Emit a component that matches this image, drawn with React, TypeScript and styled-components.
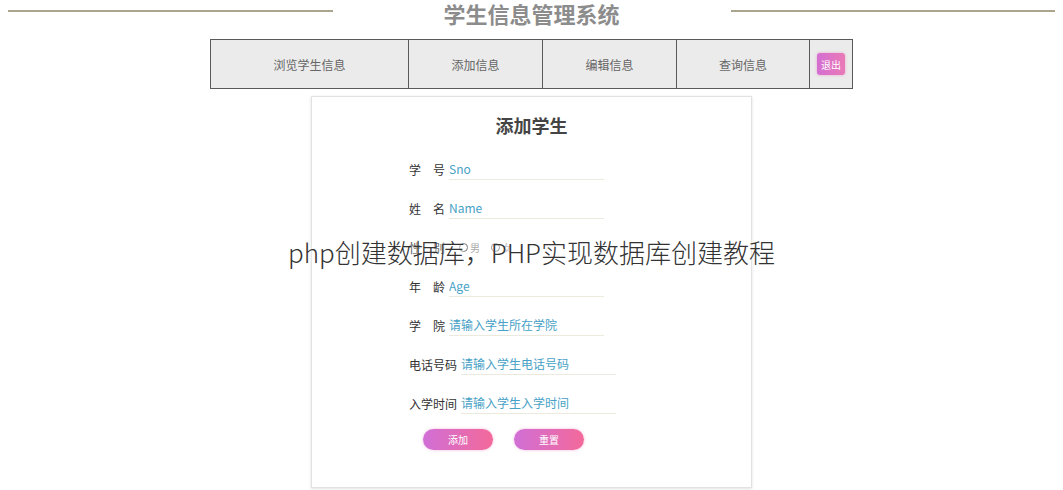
import React from "react";
import styled, { createGlobalStyle } from "styled-components";

const GlobalStyle = createGlobalStyle`
  html, body {
    margin: 0;
    padding: 0;
    background: #ffffff;
  }
  body {
    font-family: "Noto Sans CJK SC", "Noto Sans", sans-serif;
  }
`;

const Page = styled.div`
  position: relative;
  width: 1063px;
  height: 490px;
  overflow: hidden;
  display: flex;
  flex-direction: column;
  align-items: center;
`;

const Header = styled.div`
  width: 100%;
  box-sizing: border-box;
  height: 26px;
  padding: 0 8px;
  display: flex;
  align-items: center;
  gap: 111px;
  margin-bottom: 13px;
`;

const HeaderLine = styled.div`
  flex: 1;
  height: 2px;
  margin-top: -5px;
  background: #aaa58c;
`;

const Title = styled.h1`
  margin: 0;
  font-size: 22px;
  line-height: 26px;
  font-weight: 700;
  color: #8c8c8c;
  white-space: nowrap;
`;

const Nav = styled.div`
  width: 643px;
  height: 50px;
  box-sizing: border-box;
  border: 1px solid #5a5a5a;
  background: #ebebeb;
  display: grid;
  grid-template-columns: 197px 134px 134px 133px 1fr;
`;

const NavItem = styled.div<{ $first?: boolean }>`
  display: flex;
  align-items: center;
  justify-content: center;
  border-left: ${(p) => (p.$first ? "none" : "1px solid #5a5a5a")};
  font-size: 12px;
  color: #666;
`;

const LogoutButton = styled.button`
  width: 28px;
  height: 22px;
  padding: 0;
  border: none;
  border-radius: 3px;
  background: linear-gradient(90deg, #d36fd2, #ea79b6);
  box-shadow: 0 0 3px rgba(230, 120, 190, 0.6);
  color: #fff;
  font-family: inherit;
  font-size: 10px;
`;

const Card = styled.div`
  margin-top: 7px;
  width: 441px;
  height: 392px;
  box-sizing: border-box;
  background: #fff;
  border: 1px solid #e2e2e2;
  box-shadow: 0 1px 3px rgba(0, 0, 0, 0.12);
  padding: 15px 0 0 97px;
`;

const CardTitle = styled.h2`
  margin: 0 0 19px -97px;
  text-align: center;
  font-size: 18px;
  line-height: 26px;
  font-weight: 700;
  color: #444;
`;

const Form = styled.div`
  display: flex;
  flex-direction: column;
  gap: 15px;
`;

const Row = styled.div`
  height: 24px;
  display: flex;
  align-items: center;
  gap: 1px;
`;

const Label = styled.span`
  font-size: 12px;
  color: #333;
  white-space: pre;
  margin-right: 3px;
`;

const Field = styled.input`
  width: 155px;
  height: 22px;
  box-sizing: border-box;
  border: none;
  border-bottom: 1px solid #ece9de;
  padding: 0;
  outline: none;
  font-family: inherit;
  font-size: 12px;
  background: transparent;
  &::placeholder {
    color: #47a1c6;
  }
`;

const RadioGroup = styled.label`
  display: flex;
  align-items: center;
  gap: 2px;
  margin-left: 10px;
  font-size: 10px;
  color: #aaa;
`;

const Radio = styled.input`
  width: 9px;
  height: 9px;
  margin: 0;
`;

const Buttons = styled.div`
  display: flex;
  gap: 21px;
  margin: 14px 0 0 14px;
`;

const PillButton = styled.button`
  width: 70px;
  height: 21px;
  border: none;
  border-radius: 11px;
  background: linear-gradient(90deg, #d06fd6, #f3699a);
  box-shadow: 0 0 3px rgba(230, 110, 180, 0.5);
  color: #fff;
  font-family: inherit;
  font-size: 10px;
  padding: 0;
`;

const Overlay = styled.div`
  position: absolute;
  left: 0;
  right: 0;
  top: 234px;
  text-align: center;
  font-size: 26px;
  line-height: 36px;
  font-weight: 300;
  color: #333;
  text-shadow: 0 0 3px #fff, 0 0 6px #fff;
`;

const navItems = ["浏览学生信息", "添加信息", "编辑信息", "查询信息"];

const fields = [
  { label: "学　号", placeholder: "Sno" },
  { label: "姓　名", placeholder: "Name" },
];

const fieldsAfter = [
  { label: "年　龄", placeholder: "Age" },
  { label: "学　院", placeholder: "请输入学生所在学院" },
  { label: "电话号码", placeholder: "请输入学生电话号码" },
  { label: "入学时间", placeholder: "请输入学生入学时间" },
];

const App: React.FC = () => {
  return (
    <Page>
      <GlobalStyle />
      <Header>
        <HeaderLine />
        <Title>学生信息管理系统</Title>
        <HeaderLine />
      </Header>
      <Nav>
        {navItems.map((item, i) => (
          <NavItem key={item} $first={i === 0}>
            {item}
          </NavItem>
        ))}
        <NavItem>
          <LogoutButton>退出</LogoutButton>
        </NavItem>
      </Nav>
      <Card>
        <CardTitle>添加学生</CardTitle>
        <Form>
          {fields.map((f) => (
            <Row key={f.label}>
              <Label>{f.label}</Label>
              <Field placeholder={f.placeholder} />
            </Row>
          ))}
          <Row>
            <Label>性　别</Label>
            <RadioGroup>
              <Radio type="radio" name="sex" />男
            </RadioGroup>
            <RadioGroup>
              <Radio type="radio" name="sex" />女
            </RadioGroup>
          </Row>
          {fieldsAfter.map((f) => (
            <Row key={f.label}>
              <Label>{f.label}</Label>
              <Field placeholder={f.placeholder} />
            </Row>
          ))}
        </Form>
        <Buttons>
          <PillButton>添加</PillButton>
          <PillButton>重置</PillButton>
        </Buttons>
      </Card>
      <Overlay>php创建数据库，PHP实现数据库创建教程</Overlay>
    </Page>
  );
};

export default App;
